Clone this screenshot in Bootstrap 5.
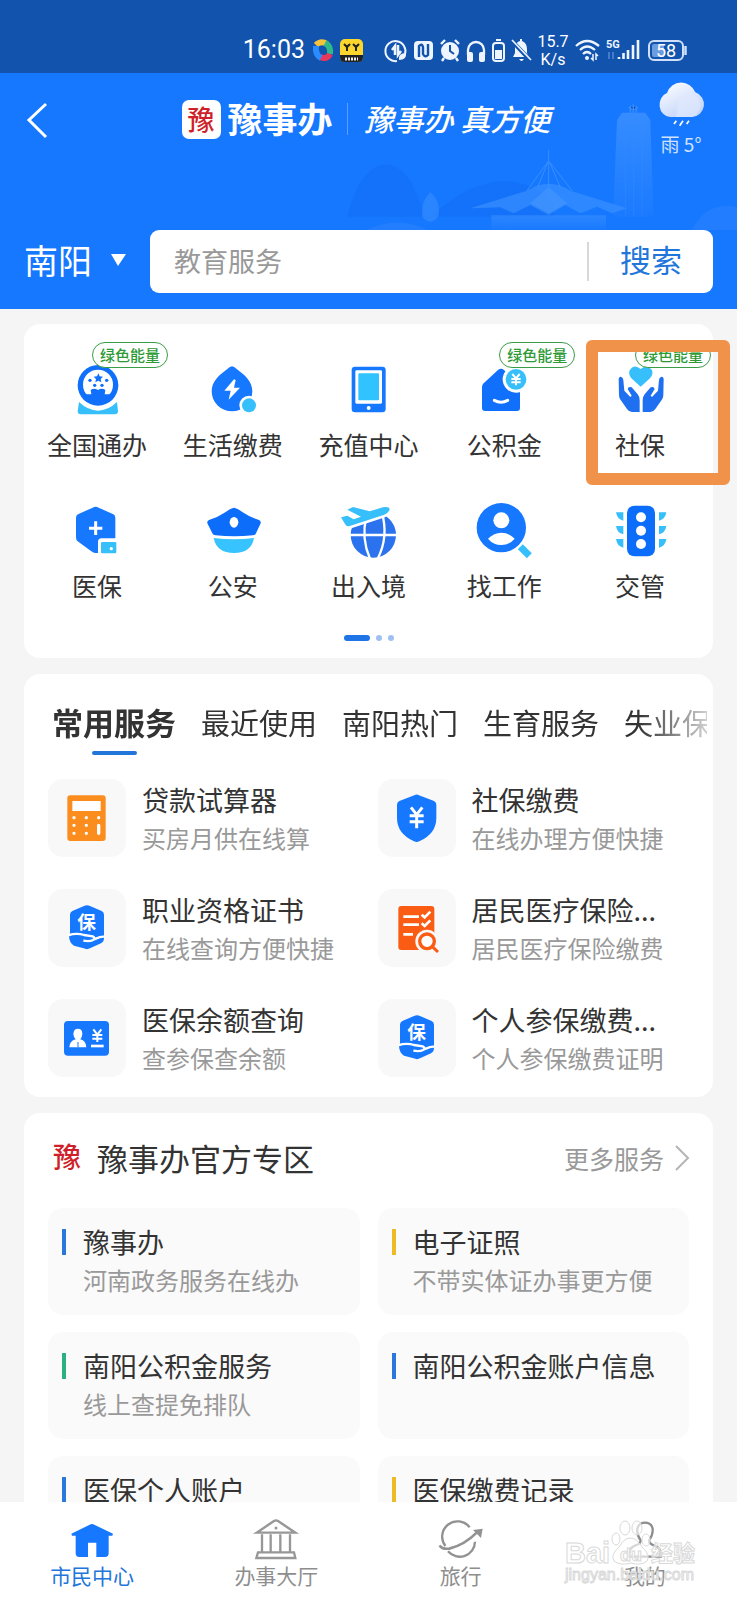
<!DOCTYPE html>
<html lang="zh-CN">
<head>
<meta charset="utf-8">
<meta name="viewport" content="width=device-width, initial-scale=1">
<title>豫事办</title>
<link href="https://cdn.jsdelivr.net/npm/bootstrap@5.3.0/dist/css/bootstrap.min.css" rel="stylesheet">
<style>
:root{--blue:#1677ff;--ink:#333;--soft:#999}
body{font-family:"Noto Sans CJK SC","Noto Sans",sans-serif;color:var(--ink);background:#f5f5f6}
a,a:hover{color:inherit;text-decoration:none}
svg{display:block;flex:none;overflow:visible}
.status-bar{height:73px;padding:25px 50px 0 0;background:#1253ae;gap:6px}
.clock{font:400 25px/50px Roboto,sans-serif;margin-right:1px}
.app-gap{margin-left:16px}
.net-rate{font:400 16px/18px Roboto,sans-serif;width:32px}
.hero{background:var(--blue);padding-bottom:16px}
.skyline{bottom:79px;right:0;opacity:.75}
.top-row{display:grid;grid-template-columns:1fr auto 1fr;height:157px;padding:8px 30px 0 25px}
.back-btn{border:0;background:none;padding:0;margin-top:20px;justify-self:start;align-self:start}
.brand-row{height:76px;gap:7px}
.seal{width:39px;height:39px;border-radius:7px;background:#fff}
.brand-title{font-size:35px;line-height:40px;font-weight:700;padding-bottom:3px}
.brand-rule{width:1px;height:32px;background:#5b9fff;margin:0 9px 0 7px}
.slogan{font-size:30px;line-height:40px;font-weight:500;font-style:italic;padding-bottom:3px}
.weather{justify-self:end;font-size:19px;line-height:30px;color:#cfe2ff;width:52px}
.city{font-size:34px;line-height:60px;border:0;background:none;color:#fff;padding:0 0 3px;width:102px}
.search-row{padding:0 24px;gap:24px}
.search-box{height:63px;border-radius:9px;background:#fff;overflow:hidden}
.search-box input{border:0;outline:0;font-size:27px;padding:0 24px;min-width:0;color:var(--ink)}
.search-box input::placeholder{color:var(--soft);opacity:1}
.search-box .rule{width:2px;height:39px;background:#d8d8d8}
.search-box button{border:0;background:none;width:124px;padding:0 0 4px;font-size:31px;color:#2276da}
.feed{padding:15px 24px 0;overflow-y:auto;scrollbar-width:none;min-height:0}
.feed::-webkit-scrollbar{display:none}
.panel{background:#fff;border-radius:16px;margin-bottom:16px}
.quick{display:grid;grid-template-columns:repeat(5,1fr);row-gap:30px;padding:38px 5px 0}
.quick a{font-size:25px;line-height:36px;text-align:center;position:relative;height:111px}
.quick svg{margin:0 auto 8px}
.tag{position:absolute;left:calc(50% - 5px);top:-20px;width:76px;height:26px;border:1px solid #3a9c45;border-radius:13px;background:#fff;color:#2d9a35;font-size:15px;line-height:23px;font-weight:500}
.ring{position:absolute;left:calc(50% - 54px);top:-22px;width:144px;height:145px;border:12px solid #f0924a;border-radius:6px;z-index:2}
.dots{gap:6px;padding:21px 0 17px}
.dots i{width:6px;height:6px;border-radius:3px;background:#9fc0f2}
.dots i.on{width:26px;background:#1f75e6}
.tab-strip{padding:30px 0 0 28px;margin-right:6px;gap:25px;height:105px;overflow:hidden;font-size:29px;line-height:36px;-webkit-mask-image:linear-gradient(90deg,#000 90%,transparent 103%);mask-image:linear-gradient(90deg,#000 90%,transparent 103%)}
.tab-strip a{white-space:nowrap;flex:none}
.tab-strip a.on{font-size:31px;font-weight:700}
.tab-strip a.on::after{content:"";display:block;width:45px;height:4px;border-radius:2px;background:#2276da;margin:11px auto 0}
.pair{display:grid;grid-template-columns:1fr 1fr;column-gap:18px;padding:0 24px}
.services{row-gap:32px;padding-bottom:20px}
.services a{display:flex;gap:16px;height:78px}
.services svg{background:#f8f8f8;border-radius:15px}
.txt{white-space:nowrap;padding-top:2px;min-width:0}
.t1{font-size:27px;line-height:38px}
.t2{font-size:24px;line-height:38px;color:var(--soft)}
.zone-head{padding:21px 24px 26px 28px;height:95px}
.zone-head h2{font-size:31px;line-height:44px;font-weight:400;margin:0 auto 0 15px}
.more{font-size:25px;line-height:44px;color:var(--soft);gap:11px}
.zones{row-gap:17px}
.zones a{background:#fafafa;border-radius:15px;height:107px;padding:15px 0 0 35px;white-space:nowrap;position:relative}
.zones a::before{content:"";position:absolute;left:14px;top:21px;width:4px;height:26px;background:#2b78dd}
.zones a.gold::before{background:#edbb25}
.zones a.green::before{background:#2cb07f}
.bottom-bar{background:#fff;height:98px;padding-top:19px;position:relative}
.bottom-bar a{flex:1 1 0;font-size:21px;line-height:28px;color:#8e8e8e;text-align:center}
.bottom-bar a.on{color:#2276da}
.bottom-bar svg{margin:0 auto}
.bottom-bar .stamp{position:absolute;right:32px;top:14px;pointer-events:none}
</style>
</head>
<body class="d-flex flex-column vh-100 overflow-hidden">

<div class="status-bar d-flex justify-content-end text-white flex-shrink-0">
  <span class="clock">16:03</span>
  <svg width="22" height="50" viewBox="0 0 22 50" fill="none" stroke-width="6"><path d="M4 20Q9 15 15 19" stroke="#f6c33a"/><path d="M13 18Q19 21 18 29" stroke="#2fb88a"/><path d="M18 29Q15 35 8 32" stroke="#e8375c"/><path d="M9 33Q3 30 4 21" stroke="#2a8cff"/></svg>
  <svg width="23" height="50" viewBox="0 0 23 50"><rect y="14" width="23" height="23" rx="5" fill="#fcd62c"/><path d="M0 30H23V32Q23 37 18 37H5Q0 37 0 32Z" fill="#222"/><path d="M4 19l3 3 3-3M7 22v4M13 19l3 3 3-3M16 22v4" stroke="#222" stroke-width="2" fill="none"/><path d="M5 34H18" stroke="#eee" stroke-width="3" stroke-dasharray="2 1"/></svg>
  <svg class="app-gap" width="23" height="50" viewBox="0 0 23 50" fill="none" stroke="#eef5ff" stroke-width="2"><path d="M20 29A10 10 0 1 0 12 36"/><path d="M7 25l3-4v9M13 20v10l3-4" stroke-width="2.5"/><path d="M14 35Q13 28 21 28Q22 35 14 35Z" fill="#eef5ff" stroke="none"/></svg>
  <svg width="20" height="50" viewBox="0 0 20 50"><rect y="16" width="19" height="19" rx="4" fill="#eef5ff"/><path d="M5 32V21Q8 18 9 22V29Q11 33 14 30V19" fill="none" stroke="#1253ae" stroke-width="2.4"/></svg>
  <svg width="20" height="50" viewBox="0 0 20 50" stroke="#eef5ff"><circle cx="10" cy="26" r="9" fill="#eef5ff" stroke="none"/><path d="M1 19l4-4M19 19l-4-4M4 33l-2 3M16 33l2 3" stroke-width="2.4"/><path d="M10 20v6l4 3" fill="none" stroke="#1253ae" stroke-width="2"/></svg>
  <svg width="20" height="50" viewBox="0 0 20 50"><path d="M2 30V25A8 8 0 0 1 18 25V30" fill="none" stroke="#eef5ff" stroke-width="2.3"/><rect x="1" y="27" width="6" height="10" rx="2" fill="#eef5ff"/><rect x="13" y="27" width="6" height="10" rx="2" fill="#eef5ff"/></svg>
  <svg width="13" height="50" viewBox="0 0 13 50"><rect x="1" y="18" width="11" height="18" rx="3" fill="none" stroke="#eef5ff" stroke-width="2"/><path d="M4 15H9M4 26H9V33H4Z" stroke="#eef5ff" stroke-width="2" fill="#eef5ff"/></svg>
  <svg width="20" height="50" viewBox="0 0 20 50" fill="#eef5ff"><path d="M9 14h2v2Q16 18 16 24V28L18 32H2L4 28V22Q5 17 9 16Z"/><path d="M8 34h5l-2 2h-1z"/><path d="M0 15L19 35" stroke="#1253ae" stroke-width="4"/><path d="M1 15L20 35" stroke="#eef5ff" stroke-width="1.7"/></svg>
  <span class="net-rate text-center pt-2">15.7<br>K/s</span>
  <svg width="25" height="50" viewBox="0 0 25 50" fill="none" stroke="#eef5ff" stroke-width="2.3"><path d="M1 21Q12 11 24 21M5 25Q12 18 20 25M8 29Q12 25 16 29"/><circle cx="12" cy="33" r="2" fill="#eef5ff" stroke="none"/><path d="M18 29v6l-2-2M21 35v-6l2 2" stroke-width="1.5"/></svg>
  <svg width="34" height="50" viewBox="0 0 34 50"><text x="0" y="23" font-family="Roboto" font-size="11" font-weight="700" fill="#eef5ff">5G</text><path d="M3 27v7M7 27v7" stroke="#4f86d4" stroke-width="1.6"/><path d="M13 32V34M17.500 28V34M22 25V34M27 20V34M32 15V34" stroke="#eef5ff" stroke-width="2.6"/></svg>
  <svg width="41" height="50" viewBox="0 0 41 50"><rect x="3" y="16" width="34" height="19" rx="5" fill="none" stroke="#cfe0f8" stroke-width="2"/><rect x="6" y="19" width="12" height="13" rx="2" fill="#6b9be0"/><path d="M39.500 21V30" stroke="#cfe0f8" stroke-width="2.500"/><text x="20" y="32" text-anchor="middle" font-family="Roboto" font-size="18" fill="#fff">58</text></svg>
</div>

<header class="hero text-white position-relative flex-shrink-0">
  <svg class="skyline position-absolute overflow-hidden" width="410" height="128" viewBox="-120 96 1230 384">
    <defs><linearGradient id="fade" x2="0" y2="1"><stop stop-color="#65acff" stop-opacity=".55"/><stop offset="1" stop-color="#65acff" stop-opacity=".08"/></linearGradient></defs>
    <path d="M-60 440Q-20 290 50 284Q120 280 160 400L180 450Q300 335 410 333Q500 335 560 400V440Z" fill="#0d68e8" opacity=".35"/>
    <path d="M765 128H835L850 150L860 440H738L750 150Z" fill="url(#fade)"/>
    <path d="M790 128V108M799 128V103M808 128V108M785 112L799 120L813 112" stroke="#62a9ff" stroke-width="4" opacity=".6"/>
    <path d="M775 135V440M800 135V440M825 135V440" stroke="#4295ff" stroke-width="3" opacity=".4"/>
    <path d="M310 415L480 362Q545 320 610 362L780 415L735 430L690 410L640 430L595 405L545 435L490 405L440 430L400 412Z" fill="#4c9dff" opacity=".6"/>
    <path d="M545 352L490 400L545 430L600 400Z" fill="#68b0ff" opacity=".4"/>
    <path d="M545 240V350M543 275L480 362M547 275L615 362M543 275L512 352M547 275L580 352" stroke="#58a4ff" stroke-width="3" opacity=".7"/>
    <path d="M373 436H717V480H373Z" fill="url(#fade)" opacity=".7"/>
    <path d="M190 366Q225 400 213 440Q190 470 166 440Q160 395 190 366Z" fill="#4d9dff" opacity=".5"/>
    <path d="M0 480Q90 435 180 480ZM975 480Q1020 390 1110 412V480Z" fill="#4595ff" opacity=".35"/>
  </svg>
  <div class="top-row position-relative">
    <button class="back-btn" aria-label="返回"><svg width="26" height="38" viewBox="0 0 26 38" fill="none" stroke="#fff" stroke-width="3"><path d="M21 3L4 19L21 36"/></svg></button>
    <div class="brand-row d-flex align-items-center">
      <div class="seal"><svg width="39" height="39" viewBox="0 0 39 39"><text x="19" y="30" text-anchor="middle" font-size="27" font-weight="500" fill="#cf1f2a">豫</text></svg></div>
      <span class="brand-title">豫事办</span><span class="brand-rule"></span><span class="slogan">豫事办 真方便</span>
    </div>
    <div class="weather text-center text-nowrap">
      <svg class="mx-auto" width="46" height="48" viewBox="876 30 138 144">
        <defs><linearGradient id="cloud" x2=".6" y2="1"><stop stop-color="#fff"/><stop offset="1" stop-color="#c3d5fa"/></linearGradient></defs>
        <path d="M912 138A33 37 0 0 1 903 66A45 45 0 0 1 988 64A38 38 0 0 1 978 138Z" fill="url(#cloud)"/><path d="M940 80A36 36 0 1 1 978 138H930Z" fill="#dfe8fd" opacity=".7"/>
        <path d="M931 149L924 159M951 149L941 164M969 149L962 159" stroke="#fff" stroke-width="5"/>
      </svg>雨 5°
    </div>
  </div>
  <div class="search-row d-flex position-relative">
    <button class="city d-flex align-items-center justify-content-between">南阳<svg width="15" height="12" viewBox="0 0 15 12"><path d="M0 0H15L7 12Z" fill="#fff"/></svg></button>
    <form class="search-box d-flex align-items-center flex-grow-1">
      <input class="flex-grow-1" type="text" placeholder="教育服务" aria-label="搜索服务"><span class="rule"></span><button type="button">搜索</button>
    </form>
  </div>
</header>

<main class="feed flex-grow-1">
  <section class="panel">
    <div class="quick">
      <a href="#"><svg width="56" height="56" viewBox="147 126 168 168"><circle cx="234" cy="196" r="61" fill="#1070fb"/><circle cx="234" cy="194" r="45" fill="#fff"/><path d="M235 160l4 9 10 1-7 7 2 10-9-5-9 5 2-10-7-7 10-1z" fill="#1070fb"/><g fill="#1070fb"><circle cx="210" cy="181" r="5"/><circle cx="260" cy="181" r="5"/><circle cx="224" cy="196" r="5"/><circle cx="246" cy="196" r="5"/><path d="M188 223H214L212 210Q222 203 234 210Q246 203 256 210L254 223H280Q264 245 234 245Q204 245 188 223Z"/></g><path d="M177 246Q205 272 234 272Q264 272 291 246L294 274Q294 283 284 283H183Q173 283 173 274Z" fill="#36bffa" stroke="#fff" stroke-width="12" paint-order="stroke"/></svg><span class="tag">绿色能量</span>全国通办</a>
      <a href="#"><svg width="56" height="56" viewBox="555 126 168 168"><path d="M636 139Q642 139 650 147C673 164 697 183 697 214A61 60 0 0 1 575 214C575 183 599 164 622 147Q630 139 636 139Z" fill="#1677ff"/><path d="M642 178L613 212H632L626 239L660 203H642L647 180Z" fill="#fff"/><circle cx="687" cy="256" r="29" fill="#fff"/><circle cx="687" cy="256" r="21" fill="#36bffa"/></svg>生活缴费</a>
      <a href="#"><svg width="56" height="56" viewBox="963 126 168 168"><rect x="998" y="140" width="102" height="137" rx="10" fill="#1677ff"/><rect x="1009" y="151" width="80" height="100" rx="4" fill="#fff"/><rect x="1018" y="160" width="62" height="81" rx="3" fill="#30c3ff"/><circle cx="1049" cy="264" r="6" fill="#fff"/></svg>充值中心</a>
      <a href="#"><svg width="56" height="56" viewBox="300 126 168 168"><path d="M323 190L366 150Q375 142 384 150L432 195V264Q432 273 423 273H327Q318 273 318 264V201Q318 195 323 190Z" fill="#1070fb"/><path d="M355 241Q375 252 395 241" fill="none" stroke="#fff" stroke-width="9" stroke-linecap="round"/><circle cx="420" cy="178" r="40" fill="#fff"/><circle cx="420" cy="178" r="31" fill="#36bffa"/><path d="M409 162L420 175L431 162M420 175V196M406 177H434M406 187H434" fill="none" stroke="#fff" stroke-width="6"/></svg><span class="tag">绿色能量</span>公积金</a>
      <a href="#"><svg width="56" height="56" viewBox="705 126 168 168"><path d="M791 200L763 175Q753 163 758 151Q771 130 791 147Q811 130 825 151Q830 163 819 175Z" fill="#36bffa"/><g id="palm" fill="#1f70f0"><path d="M725 176Q727 169 733 171Q738 172 739 180L742 212L760 231L764 227L752 207Q754 198 764 202L782 223Q788 230 788 241V276H765Q756 276 750 267L729 237Q726 232 726 225Z"/></g><use href="#palm" transform="matrix(-1 0 0 1 1585 0)"/></svg><span class="tag">绿色能量</span>社保<span class="ring"></span></a>
      <a href="#"><svg width="56" height="56" viewBox="147 549 168 168"><path d="M218 563Q227 558 236 563L280 583Q286 586 286 593V655H245Q234 655 234 666V699H226Q220 699 214 694L173 664Q168 660 168 652V593Q168 586 174 583Z" fill="#1677ff"/><path d="M207 625H247M227 604V645" stroke="#fff" stroke-width="9"/><rect x="243" y="666" width="46" height="34" rx="4" fill="#36bffa"/><circle cx="274" cy="686" r="5" fill="#fff"/></svg>医保</a>
      <a href="#"><svg width="56" height="56" viewBox="555 549 168 168"><path d="M642 563Q652 565 668 577Q690 592 715 599Q724 602 722 610L708 640Q706 646 699 646Q642 652 587 646Q579 646 577 640L562 610Q560 602 569 599Q594 592 616 577Q632 565 642 563Z" fill="#0b6dfa"/><ellipse cx="642" cy="607" rx="13" ry="16" fill="#fff"/><path d="M581 654Q642 662 702 654Q694 699 642 699Q590 699 581 654Z" fill="#36c3ff"/></svg>公安</a>
      <a href="#"><svg width="56" height="56" viewBox="963 549 168 168"><circle cx="1063" cy="645" r="68" fill="#2b72ee"/><g fill="none" stroke="#fff" stroke-width="7"><path d="M990 645H1135M1042 590Q1026 655 1053 716M1088 575Q1110 650 1076 716"/></g><path d="M966 592L985 587L1004 598L1026 590L985 569L1002 561L1052 574L1092 562Q1110 558 1112 568Q1110 578 1096 584L990 619Q982 620 978 612Z" fill="#36bffa" stroke="#fff" stroke-width="16" stroke-linejoin="round" paint-order="stroke"/></svg>出入境</a>
      <a href="#"><svg width="56" height="56" viewBox="300 549 168 168"><circle cx="376" cy="623" r="74" fill="#1677ff"/><circle cx="376" cy="601" r="24" fill="#fff"/><path d="M336 656Q354 638 376 638Q398 638 416 656Q400 675 376 675Q352 675 336 656Z" fill="#fff"/><path d="M433 680L460 707" stroke="#36bffa" stroke-width="21"/></svg>找工作</a>
      <a href="#"><svg width="56" height="56" viewBox="705 549 168 168"><rect x="750" y="557" width="84" height="152" rx="22" fill="#0b6dfa"/><g fill="#fff"><circle cx="792" cy="592" r="15"/><circle cx="792" cy="632" r="15"/><circle cx="792" cy="672" r="15"/></g><path id="fins" d="M717 577H739V602Q720 598 717 577ZM717 618H739V643Q720 639 717 618ZM717 657H739V683Q720 679 717 657Z" fill="#36bffa"/><use href="#fins" transform="matrix(-1 0 0 1 1585 0)"/></svg>交管</a>
    </div>
    <div class="dots d-flex justify-content-center"><i class="on"></i><i></i><i></i></div>
  </section>

  <section class="panel">
    <nav class="tab-strip d-flex" aria-label="服务分类">
      <a class="on" href="#">常用服务</a><a href="#">最近使用</a><a href="#">南阳热门</a><a href="#">生育服务</a><a href="#">失业保险</a>
    </nav>
    <div class="pair services">
      <a href="#"><svg width="78" height="78" viewBox="84 327 234 234"><rect x="142" y="376" width="115" height="137" rx="9" fill="#fb8c1e"/><path d="M157 393H242V423H157Z" fill="#fff"/><g stroke="#fff" stroke-width="10" stroke-linecap="round"><path d="M162 443h0M199 443h0M236 443h0M162 466h0M199 466h0M236 466V490M162 490h0M199 490h0"/></g></svg><div class="txt"><div class="t1">贷款试算器</div><div class="t2">买房月供在线算</div></div></a>
      <a href="#"><svg width="78" height="78" viewBox="34 327 234 234"><path d="M143 376Q150 371 157 376L202 393Q209 396 209 404V444Q209 491 158 514Q150 518 142 514Q91 491 91 444V404Q91 396 98 393Z" fill="#1677ff"/><path d="M133 412L150 434L167 412M150 434V475M129 437H171M129 455H171" fill="none" stroke="#fff" stroke-width="9"/></svg><div class="txt"><div class="t1">社保缴费</div><div class="t2">在线办理方便快捷</div></div></a>
      <a href="#"><svg width="78" height="78" viewBox="84 657 234 234"><g id="care"><path d="M192 708Q201 703 210 708L245 723Q252 726 252 734V805Q252 815 243 820L210 835Q201 840 191 835L162 827Q148 819 147 798L150 790V734Q150 726 157 723Z" fill="#1677ff"/><path d="M144 796Q170 788 192 795L218 799Q228 804 219 810Q210 815 190 812M222 808Q240 799 256 799" fill="none" stroke="#fff" stroke-width="7"/><text x="200" y="776" text-anchor="middle" font-size="56" font-weight="700" fill="#fff">保</text></g></svg><div class="txt"><div class="t1">职业资格证书</div><div class="t2">在线查询方便快捷</div></div></a>
      <a href="#"><svg width="78" height="78" viewBox="34 657 234 234"><rect x="95" y="708" width="108" height="132" rx="9" fill="#fb5c14"/><path d="M110 740H157M110 764H157M110 793H139M165 734L174 742L191 725M165 760L174 768L191 751" fill="none" stroke="#fff" stroke-width="8"/><circle cx="181" cy="814" r="35" fill="#f8f8f8"/><circle cx="181" cy="814" r="22" fill="#fff" stroke="#fb5c14" stroke-width="10"/><path d="M197 830L214 846" stroke="#fb5c14" stroke-width="9"/></svg><div class="txt"><div class="t1">居民医疗保险...</div><div class="t2">居民医疗保险缴费</div></div></a>
      <a href="#"><svg width="78" height="78" viewBox="84 987 234 234"><rect x="132" y="1053" width="135" height="104" rx="12" fill="#1677ff"/><path d="M174 1076Q187 1076 187 1092Q186 1103 181 1108Q198 1112 199 1132H148Q149 1112 167 1108Q161 1103 160 1092Q161 1076 174 1076Z" fill="#fff"/><path d="M174 1116V1132" stroke="#1677ff" stroke-width="3"/><path d="M220 1078L232 1094L244 1078M232 1094V1116M217 1095H247M217 1106H247" fill="none" stroke="#fff" stroke-width="6"/><path d="M213 1128H251" stroke="#fff" stroke-width="8"/></svg><div class="txt"><div class="t1">医保余额查询</div><div class="t2">查参保查余额</div></div></a>
      <a href="#"><svg width="78" height="78" viewBox="84 657 234 234"><use href="#care"/></svg><div class="txt"><div class="t1">个人参保缴费...</div><div class="t2">个人参保缴费证明</div></div></a>
    </div>
  </section>

  <section class="panel">
    <div class="zone-head d-flex align-items-center">
      <svg width="30" height="44" viewBox="0 0 30 44"><text x="15" y="32" text-anchor="middle" font-size="28" font-weight="500" fill="#cf1f2a">豫</text></svg>
      <h2>豫事办官方专区</h2>
      <a class="more d-flex align-items-center" href="#">更多服务<svg width="14" height="26" viewBox="0 0 14 26" fill="none" stroke="#b5b5b5" stroke-width="2"><path d="M1 1L13 13L1 25"/></svg></a>
    </div>
    <div class="pair zones">
      <a href="#"><div class="t1">豫事办</div><div class="t2">河南政务服务在线办</div></a>
      <a class="gold" href="#"><div class="t1">电子证照</div><div class="t2">不带实体证办事更方便</div></a>
      <a class="green" href="#"><div class="t1">南阳公积金服务</div><div class="t2">线上查提免排队</div></a>
      <a href="#"><div class="t1">南阳公积金账户信息</div></a>
      <a href="#"><div class="t1">医保个人账户</div></a>
      <a class="gold" href="#"><div class="t1">医保缴费记录</div></a>
    </div>
  </section>
</main>

<nav class="bottom-bar d-flex flex-shrink-0" aria-label="主导航">
  <a class="on" href="#"><svg width="44" height="40" viewBox="211 243 132 120"><path d="M215 281L270 254Q277 250 284 254L340 281L338 287H327V340Q327 351 316 351H290V308H265V351H239Q228 351 228 340V287H217Z" fill="#1677ff"/></svg>市民中心</a>
  <a href="#"><svg width="44" height="40" viewBox="766 243 132 120" fill="none" stroke="#979797" stroke-width="7"><path d="M774 278L826 243Q832 239 838 243L890 278ZM790 283V334M816 283V334M845 283V334M874 283V334M778 337H886L890 354H773Z"/><circle cx="832" cy="264" r="2" stroke-width="5"/></svg>办事大厅</a>
  <a href="#"><svg width="44" height="40" viewBox="214 243 132 120" fill="none" stroke="#929292" stroke-width="7"><path d="M306 262A46 46 0 0 0 233 318M241 334A46 46 0 0 0 322 305"/><path d="M216 316Q222 328 245 326Q290 315 327 278" stroke-width="8"/><path d="M316 270L345 266L340 294Z" fill="#929292" stroke="none"/></svg>旅行</a>
  <a href="#"><svg width="44" height="40" viewBox="771 243 132 120" fill="none" stroke="#8e8e8e" stroke-width="7"><path d="M824 301Q812 285 814 266Q819 248 837 248Q856 248 860 266Q861 285 849 301Q850 312 866 317Q886 323 885 350H789Q788 323 807 317Q824 312 824 301Z"/></svg>我的</a>
  <svg class="stamp" width="142" height="72" viewBox="0 0 142 72" fill="#fff" fill-opacity=".65" stroke="#d9d9d9" stroke-width="1" font-weight="700">
    <text x="2" y="47" font-family="Liberation Sans" font-size="29">Bai</text>
    <ellipse cx="53" cy="23" rx="4" ry="6"/><ellipse cx="62" cy="12" rx="5" ry="7"/><ellipse cx="74" cy="12" rx="5" ry="7"/><ellipse cx="83" cy="24" rx="4" ry="6"/>
    <path d="M67 22Q74 22 79 31Q88 39 84 45Q78 50 68 47Q57 50 51 45Q47 39 56 31Q61 22 67 22Z"/>
    <text x="57" y="45" font-family="Liberation Sans" font-size="18">du</text>
    <text x="88" y="45" font-size="22">经验</text>
    <text x="2" y="64" font-family="Liberation Sans" font-size="16" font-weight="400">jingyan.baidu.com</text>
  </svg>
</nav>
<script src="https://cdn.jsdelivr.net/npm/bootstrap@5.3.0/dist/js/bootstrap.bundle.min.js"></script>
</body>
</html>
